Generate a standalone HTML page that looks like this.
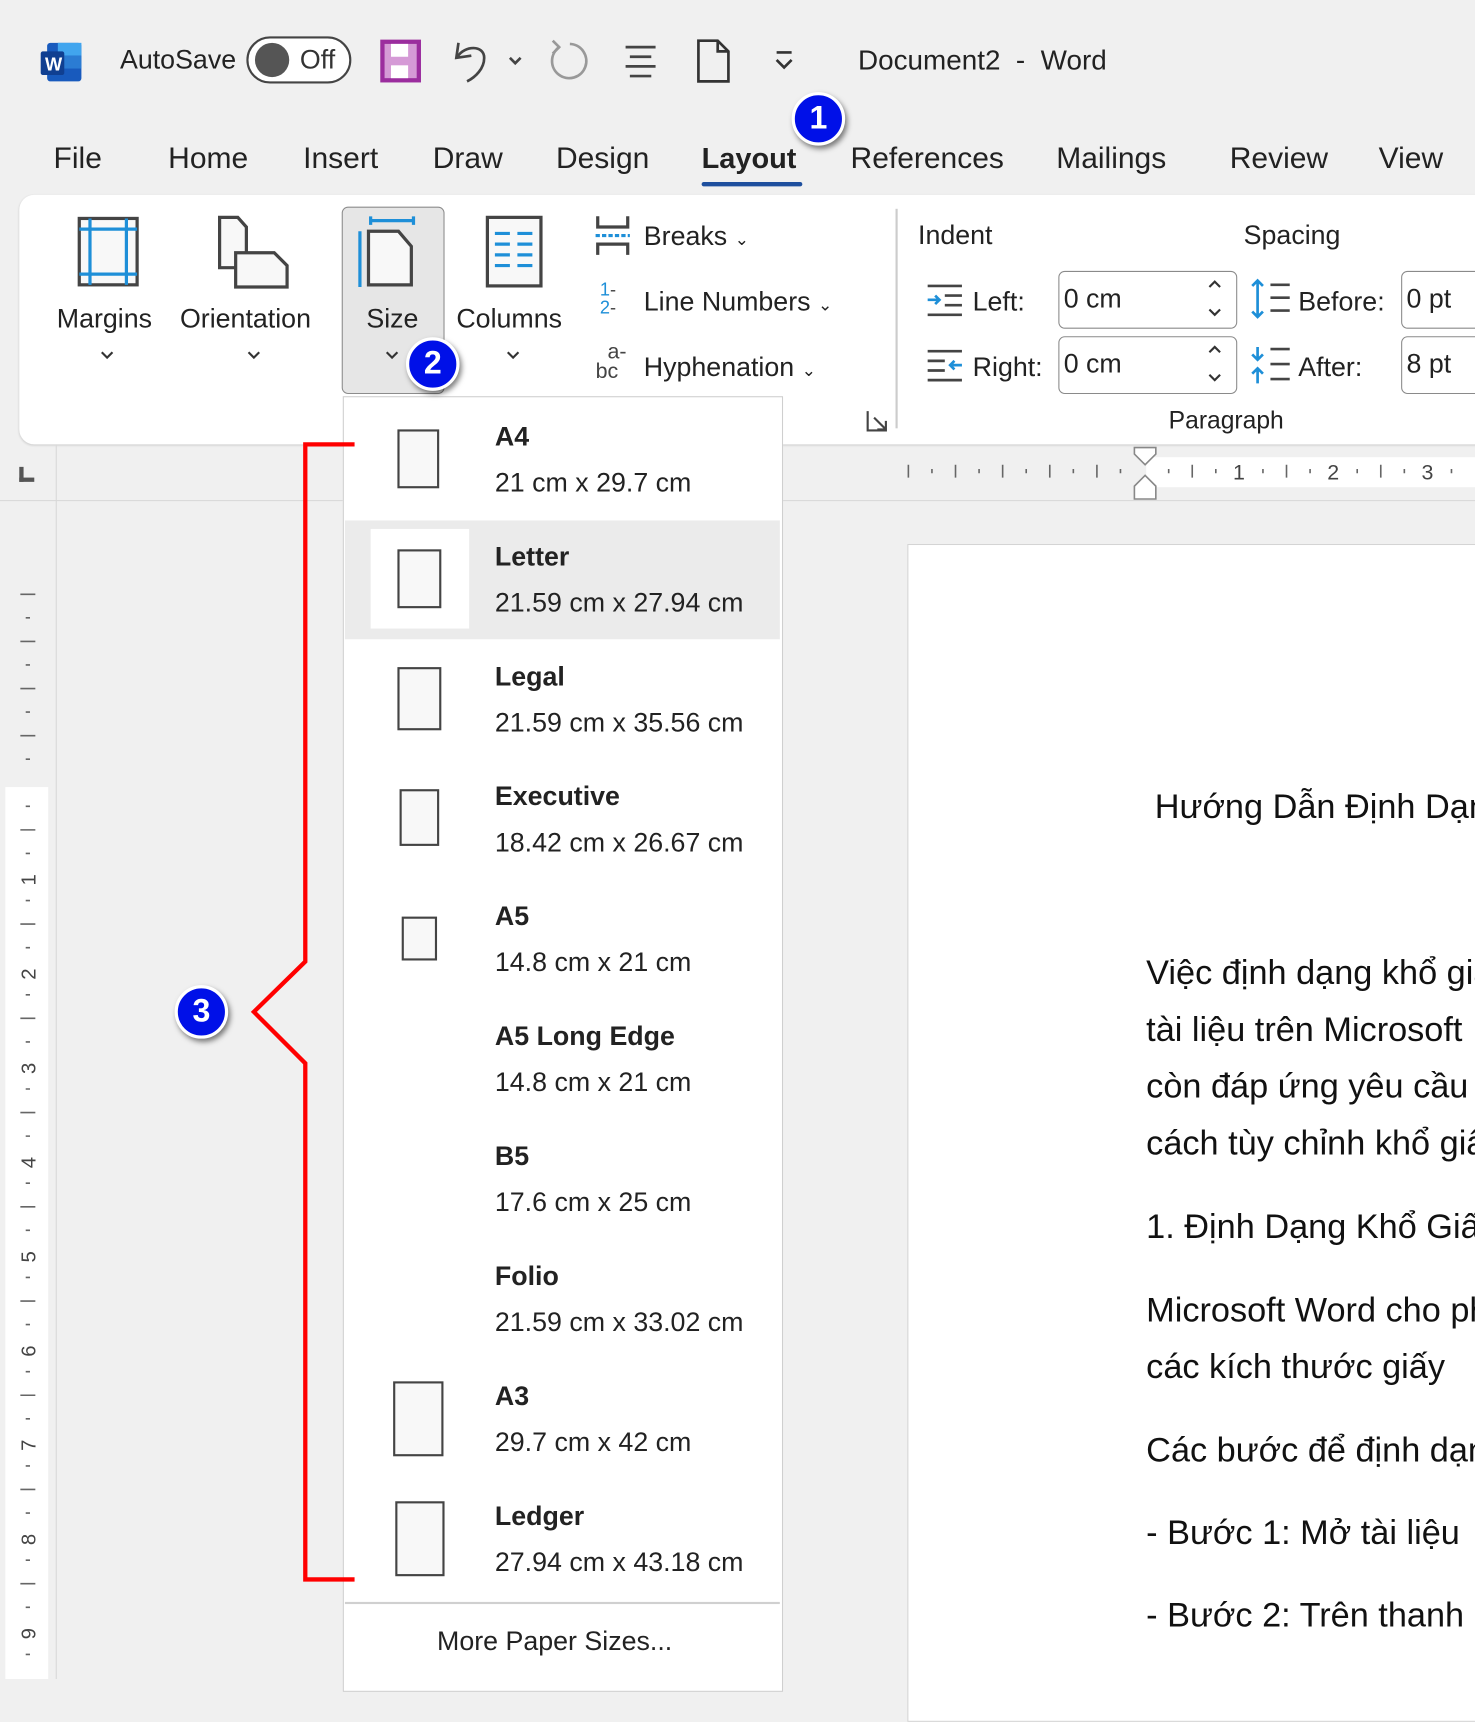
<!DOCTYPE html>
<html><head><meta charset="utf-8"><style>
*{margin:0;padding:0;box-sizing:border-box}
html,body{width:1475px;height:1679px;overflow:hidden;background:#f0f0f0}
#w{position:absolute;left:0;top:0;width:1377px;height:1568px;transform:scale(1.0712,1.0708);transform-origin:0 0;font-family:"Liberation Sans","DejaVu Sans",sans-serif;color:#222}
.a{position:absolute;white-space:nowrap}
.t{font-size:28px;top:132px}
.r{font-size:25px}
.it b{display:block;font-size:25px;color:#222}
.lbl{position:absolute;left:462px;font-size:25px;color:#222;white-space:nowrap}
.ttl{font-weight:bold}
.pg{position:absolute;border:2px solid #444;background:#f8f8f8}
.badge{position:absolute;width:50px;height:50px;border-radius:50%;background:#0010e8;border:3px solid #fff;box-shadow:2px 3px 5px rgba(0,0,0,.5);color:#fff;font-weight:bold;font-size:30px;text-align:center;line-height:44px}
.doc{position:absolute;left:1070px;font-size:32px;color:#111;white-space:nowrap}
.box{position:absolute;border:1.5px solid #8a8a8a;border-radius:6px;background:#fff;font-size:25px;padding-left:4px;line-height:50px}
</style></head><body><div id="w">
<!-- title bar -->
<svg class="a" style="left:36px;top:38px" width="42" height="40"><rect x="8" y="2" width="32" height="36" rx="3" fill="#185abd"/><rect x="18" y="2" width="22" height="12" fill="#41a5ee"/><rect x="18" y="14" width="22" height="12" fill="#2b7cd3"/><rect x="2" y="10" width="22" height="22" rx="2" fill="#103f91"/><text x="6" y="28" fill="#fff" font-size="17" font-weight="bold" font-family="Liberation Sans">W</text></svg>
<div class="a" style="left:112px;top:42px;font-size:25px">AutoSave</div>
<div class="a" style="left:230px;top:34px;width:98px;height:44px;border:2px solid #444;border-radius:22px;background:#fff"></div>
<div class="a" style="left:238px;top:40px;width:32px;height:32px;border-radius:50%;background:#555"></div>
<div class="a" style="left:280px;top:42px;font-size:25px;color:#333">Off</div>
<svg class="a" style="left:354px;top:36px" width="40" height="42"><rect x="3" y="3" width="34" height="36" fill="#d59ad6" stroke="#9b2d9e" stroke-width="4"/><rect x="11" y="5" width="16" height="12" fill="#fff"/><rect x="11" y="25" width="16" height="12" fill="#fff"/></svg>
<svg class="a" style="left:420px;top:34px" width="72" height="46" fill="none" stroke="#444" stroke-width="2.5"><path d="M8 6 L6 20 L20 18"/><path d="M7 19 C14 8 32 8 32 20 C32 30 24 38 16 42"/><path d="M56 20 L61 25 L66 20"/></svg>
<svg class="a" style="left:508px;top:34px" width="46" height="46" fill="none" stroke="#999" stroke-width="2.5"><path d="M14 10 A16 16 0 1 0 24 7"/><path d="M8 4 L14 10 L8 16"/></svg>
<svg class="a" style="left:580px;top:40px" width="36" height="34" stroke="#444" stroke-width="2.5"><line x1="4" y1="4" x2="32" y2="4"/><line x1="8" y1="13" x2="28" y2="13"/><line x1="4" y1="22" x2="32" y2="22"/><line x1="8" y1="31" x2="28" y2="31"/></svg>
<svg class="a" style="left:648px;top:36px" width="36" height="42" fill="none" stroke="#333" stroke-width="2.5"><path d="M4 2 H22 L32 12 V40 H4 Z M22 2 V12 H32"/></svg>
<svg class="a" style="left:720px;top:46px" width="24" height="22" fill="none" stroke="#333" stroke-width="2.5"><line x1="5" y1="3" x2="19" y2="3"/><path d="M5 10 L12 17 L19 10"/></svg>
<div class="a" style="left:801px;top:41px;font-size:26px;color:#222">Document2&nbsp; - &nbsp;Word</div>
<!-- tabs -->
<div class="a t" style="left:50px">File</div>
<div class="a t" style="left:157px">Home</div>
<div class="a t" style="left:283px">Insert</div>
<div class="a t" style="left:404px">Draw</div>
<div class="a t" style="left:519px">Design</div>
<div class="a t" style="left:655px;font-weight:bold;font-size:27px;top:133px">Layout</div>
<div class="a" style="left:655px;top:170px;width:94px;height:4px;background:#1e4f9e;border-radius:2px"></div>
<div class="a t" style="left:794px">References</div>
<div class="a t" style="left:986px">Mailings</div>
<div class="a t" style="left:1148px">Review</div>
<div class="a t" style="left:1287px">View</div>
<!-- ribbon -->
<div class="a" style="left:18px;top:182px;width:1380px;height:233px;background:#fff;border-radius:14px;box-shadow:0 1px 2px rgba(0,0,0,.15)"></div>
<div class="a" style="left:319px;top:193px;width:96px;height:175px;background:#e6e6e6;border:1.5px solid #8c8c8c;border-radius:6px"></div>
<svg class="a" style="left:70px;top:200px" width="62" height="70"><rect x="4" y="4" width="54" height="62" fill="#f8f8f8" stroke="#444" stroke-width="3"/><g stroke="#1e8fd8" stroke-width="3"><line x1="4" y1="14" x2="58" y2="14"/><line x1="4" y1="56" x2="58" y2="56"/><line x1="14" y1="4" x2="14" y2="66"/><line x1="48" y1="4" x2="48" y2="66"/></g></svg>
<svg class="a" style="left:200px;top:200px" width="74" height="70" fill="#f8f8f8" stroke="#444" stroke-width="3"><path d="M5 3 H22 L30 12 V50 H5 Z"/><path d="M20 36 H56 L68 48 V68 H20 Z"/></svg>
<svg class="a" style="left:332px;top:202px" width="60" height="68"><g stroke="#1e8fd8" stroke-width="3"><line x1="14" y1="4" x2="54" y2="4"/><line x1="14" y1="0" x2="14" y2="8"/><line x1="54" y1="0" x2="54" y2="8"/><line x1="4" y1="14" x2="4" y2="66"/></g><path d="M12 14 H40 L52 28 V64 H12 Z" fill="#f8f8f8" stroke="#444" stroke-width="3"/></svg>
<svg class="a" style="left:452px;top:200px" width="56" height="70"><rect x="3" y="3" width="50" height="64" fill="#f8f8f8" stroke="#444" stroke-width="3"/><g stroke="#1e8fd8" stroke-width="3"><line x1="10" y1="18" x2="24" y2="18"/><line x1="31" y1="18" x2="45" y2="18"/><line x1="10" y1="28" x2="24" y2="28"/><line x1="31" y1="28" x2="45" y2="28"/><line x1="10" y1="38" x2="24" y2="38"/><line x1="31" y1="38" x2="45" y2="38"/><line x1="10" y1="48" x2="24" y2="48"/><line x1="31" y1="48" x2="45" y2="48"/></g></svg>
<div class="a r" style="left:53px;top:284px">Margins</div>
<div class="a r" style="left:168px;top:284px">Orientation</div>
<div class="a r" style="left:342px;top:284px">Size</div>
<div class="a r" style="left:426px;top:284px">Columns</div>
<svg class="a" style="left:0;top:325px" width="500" height="16" fill="none" stroke="#333" stroke-width="2"><path d="M95 4 L100 9 L105 4"/><path d="M232 4 L237 9 L242 4"/><path d="M361 4 L366 9 L371 4"/><path d="M474 4 L479 9 L484 4"/></svg>
<svg class="a" style="left:554px;top:200px" width="36" height="40"><g stroke="#444" stroke-width="3" fill="none"><path d="M4 2 V12 H32 V2"/><path d="M4 38 V28 H32 V38"/></g><line x1="2" y1="20" x2="34" y2="20" stroke="#1e8fd8" stroke-width="3" stroke-dasharray="4 2"/></svg>
<div class="a r" style="left:601px;top:207px">Breaks <span style="font-size:16px">&#8964;</span></div>
<div class="a" style="left:560px;top:262px;font-size:17px;color:#1e8fd8;line-height:17px">1<span style="color:#444">-</span><br>2<span style="color:#444">-</span></div>
<div class="a r" style="left:601px;top:268px">Line Numbers <span style="font-size:16px">&#8964;</span></div>
<div class="a" style="left:556px;top:320px;font-size:20px;color:#444;line-height:18px">&nbsp;&nbsp;a-<br>bc</div>
<div class="a r" style="left:601px;top:329px">Hyphenation <span style="font-size:16px">&#8964;</span></div>
<svg class="a" style="left:808px;top:382px" width="22" height="22" fill="none" stroke="#444" stroke-width="2"><path d="M2 2 V20 H20 M8 8 L19 19 M19 11 V19 H11"/></svg>
<div class="a" style="left:836px;top:195px;width:1.5px;height:205px;background:#ccc"></div>
<div class="a r" style="left:857px;top:206px">Indent</div>
<div class="a r" style="left:1161px;top:206px">Spacing</div>
<svg class="a" style="left:862px;top:264px" width="40" height="96"><g stroke="#444" stroke-width="2.5"><line x1="4" y1="3" x2="36" y2="3"/><line x1="20" y1="12" x2="36" y2="12"/><line x1="20" y1="21" x2="36" y2="21"/><line x1="4" y1="30" x2="36" y2="30"/><line x1="4" y1="64" x2="36" y2="64"/><line x1="4" y1="73" x2="20" y2="73"/><line x1="4" y1="82" x2="20" y2="82"/><line x1="4" y1="91" x2="36" y2="91"/></g><g stroke="#1e8fd8" stroke-width="2.5" fill="none"><path d="M4 16 H15 M11 12 L15 16 L11 20"/><path d="M36 77 H25 M29 73 L25 77 L29 81"/></g></svg>
<div class="a r" style="left:908px;top:268px">Left:</div>
<div class="a r" style="left:908px;top:329px">Right:</div>
<div class="box" style="left:988px;top:253px;width:167px;height:54px">0 cm</div>
<div class="box" style="left:988px;top:314px;width:167px;height:54px">0 cm</div>
<svg class="a" style="left:1124px;top:258px" width="20" height="106" fill="none" stroke="#333" stroke-width="2"><path d="M5 10 L10 5 L15 10"/><path d="M5 31 L10 36 L15 31"/><path d="M5 71 L10 66 L15 71"/><path d="M5 92 L10 97 L15 92"/></svg>
<svg class="a" style="left:1164px;top:260px" width="44" height="102"><g stroke="#1e8fd8" stroke-width="2.5" fill="none"><path d="M10 2 V36 M5 7 L10 2 L15 7 M5 31 L10 36 L15 31"/><path d="M10 64 V76 M5 71 L10 76 L15 71"/><path d="M10 84 V98 M5 89 L10 84 L15 89"/></g><g stroke="#444" stroke-width="2.5"><line x1="22" y1="6" x2="40" y2="6"/><line x1="22" y1="18" x2="40" y2="18"/><line x1="22" y1="30" x2="40" y2="30"/><line x1="22" y1="66" x2="40" y2="66"/><line x1="22" y1="80" x2="40" y2="80"/><line x1="22" y1="94" x2="40" y2="94"/></g></svg>
<div class="a r" style="left:1212px;top:268px">Before:</div>
<div class="a r" style="left:1212px;top:329px">After:</div>
<div class="box" style="left:1308px;top:253px;width:90px;height:54px">0 pt</div>
<div class="box" style="left:1308px;top:314px;width:90px;height:54px">8 pt</div>
<div class="a" style="left:1091px;top:379px;font-size:23px">Paragraph</div>
<!-- rulers -->
<div class="a" style="left:18px;top:436px;width:14px;height:14px;border-left:4px solid #555;border-bottom:4px solid #555"></div>
<div class="a" style="left:52px;top:415px;width:1px;height:1153px;background:#d8d8d8"></div>
<div class="a" style="left:0;top:467px;width:1377px;height:1px;background:#d8d8d8"></div>
<div class="a" style="left:1070px;top:427px;width:310px;height:28px;background:#fff"></div>
<svg class="a" style="left:840px;top:416px" width="540" height="52"><g stroke="#666" stroke-width="1.5"><line x1="8" y1="18" x2="8" y2="30"/><line x1="30" y1="22" x2="30" y2="26"/><line x1="52" y1="18" x2="52" y2="30"/><line x1="74" y1="22" x2="74" y2="26"/><line x1="96" y1="18" x2="96" y2="30"/><line x1="118" y1="22" x2="118" y2="26"/><line x1="140" y1="18" x2="140" y2="30"/><line x1="162" y1="22" x2="162" y2="26"/><line x1="184" y1="18" x2="184" y2="30"/><line x1="206" y1="22" x2="206" y2="26"/><line x1="251" y1="22" x2="251" y2="26"/><line x1="273" y1="18" x2="273" y2="30"/><line x1="295" y1="22" x2="295" y2="26"/><line x1="339" y1="22" x2="339" y2="26"/><line x1="361" y1="18" x2="361" y2="30"/><line x1="383" y1="22" x2="383" y2="26"/><line x1="427" y1="22" x2="427" y2="26"/><line x1="449" y1="18" x2="449" y2="30"/><line x1="471" y1="22" x2="471" y2="26"/><line x1="515" y1="22" x2="515" y2="26"/></g><path d="M219 2 H239 V8 L229 18 L219 8 Z M219 50 V38 L229 28 L239 38 V50 Z" fill="#fff" stroke="#888" stroke-width="1.5"/><g font-size="20" fill="#444" font-family="Liberation Sans"><text x="311" y="32">1</text><text x="399" y="32">2</text><text x="487" y="32">3</text></g></svg>
<div class="a" style="left:5px;top:735px;width:40px;height:833px;background:#fff"></div>
<svg class="a" style="left:0;top:540px" width="52" height="1028"><g stroke="#666" stroke-width="1.5">
<line x1="19" y1="15" x2="33" y2="15"/><line x1="24" y1="37" x2="28" y2="37"/><line x1="19" y1="59" x2="33" y2="59"/><line x1="24" y1="81" x2="28" y2="81"/><line x1="19" y1="103" x2="33" y2="103"/><line x1="24" y1="125" x2="28" y2="125"/><line x1="19" y1="147" x2="33" y2="147"/><line x1="24" y1="169" x2="28" y2="169"/>
<line x1="24" y1="213" x2="28" y2="213"/><line x1="19" y1="235" x2="33" y2="235"/><line x1="24" y1="257" x2="28" y2="257"/><line x1="24" y1="301" x2="28" y2="301"/><line x1="19" y1="323" x2="33" y2="323"/><line x1="24" y1="345" x2="28" y2="345"/><line x1="24" y1="389" x2="28" y2="389"/><line x1="19" y1="411" x2="33" y2="411"/><line x1="24" y1="433" x2="28" y2="433"/><line x1="24" y1="477" x2="28" y2="477"/><line x1="19" y1="499" x2="33" y2="499"/><line x1="24" y1="521" x2="28" y2="521"/><line x1="24" y1="565" x2="28" y2="565"/><line x1="19" y1="587" x2="33" y2="587"/><line x1="24" y1="609" x2="28" y2="609"/><line x1="24" y1="653" x2="28" y2="653"/><line x1="19" y1="675" x2="33" y2="675"/><line x1="24" y1="697" x2="28" y2="697"/><line x1="24" y1="741" x2="28" y2="741"/><line x1="19" y1="763" x2="33" y2="763"/><line x1="24" y1="785" x2="28" y2="785"/><line x1="24" y1="829" x2="28" y2="829"/><line x1="19" y1="851" x2="33" y2="851"/><line x1="24" y1="873" x2="28" y2="873"/><line x1="24" y1="917" x2="28" y2="917"/><line x1="19" y1="939" x2="33" y2="939"/><line x1="24" y1="961" x2="28" y2="961"/><line x1="24" y1="1005" x2="28" y2="1005"/></g>
<g font-size="19" fill="#444" font-family="Liberation Sans"><text transform="translate(33,287) rotate(-90)">1</text><text transform="translate(33,375) rotate(-90)">2</text><text transform="translate(33,463) rotate(-90)">3</text><text transform="translate(33,551) rotate(-90)">4</text><text transform="translate(33,639) rotate(-90)">5</text><text transform="translate(33,727) rotate(-90)">6</text><text transform="translate(33,815) rotate(-90)">7</text><text transform="translate(33,903) rotate(-90)">8</text><text transform="translate(33,991) rotate(-90)">9</text></g></svg>
<!-- document -->
<div class="a" style="left:847px;top:508px;width:560px;height:1100px;background:#fff;border:1px solid #d4d4d4"></div>
<div class="doc" style="left:1078px;top:735px">Hướng Dẫn Định Dạng</div>
<div class="doc" style="top:890px">Việc định dạng khổ giấy</div>
<div class="doc" style="top:943px">tài liệu trên Microsoft</div>
<div class="doc" style="top:996px">còn đáp ứng yêu cầu</div>
<div class="doc" style="top:1049px">cách tùy chỉnh khổ giấy</div>
<div class="doc" style="top:1127px">1. Định Dạng Khổ Giấy</div>
<div class="doc" style="top:1205px">Microsoft Word cho phép</div>
<div class="doc" style="top:1258px">các kích thước giấy</div>
<div class="doc" style="top:1336px">Các bước để định dạng</div>
<div class="doc" style="top:1413px">- Bước 1: Mở tài liệu</div>
<div class="doc" style="top:1490px">- Bước 2: Trên thanh</div>
<!-- dropdown -->
<div class="a" style="left:320px;top:370px;width:411px;height:1210px;background:#fff;border:1px solid #cfcfcf"></div>
<div class="a" style="left:322px;top:486px;width:406px;height:111px;background:#ebebeb"></div>
<div class="a" style="left:346px;top:494px;width:92px;height:93px;background:#fff"></div>
<div class="pg" style="left:371px;top:401px;width:39px;height:55px"></div>
<div class="pg" style="left:371px;top:513px;width:41px;height:55px"></div>
<div class="pg" style="left:371px;top:623px;width:41px;height:59px"></div>
<div class="pg" style="left:373px;top:737px;width:37px;height:53px"></div>
<div class="pg" style="left:375px;top:856px;width:33px;height:41px"></div>
<div class="pg" style="left:367px;top:1290px;width:47px;height:70px"></div>
<div class="pg" style="left:369px;top:1402px;width:46px;height:70px"></div>
<div class="lbl ttl" style="top:394px">A4</div><div class="lbl" style="top:437px">21 cm x 29.7 cm</div>
<div class="lbl ttl" style="top:506px">Letter</div><div class="lbl" style="top:549px">21.59 cm x 27.94 cm</div>
<div class="lbl ttl" style="top:618px">Legal</div><div class="lbl" style="top:661px">21.59 cm x 35.56 cm</div>
<div class="lbl ttl" style="top:730px">Executive</div><div class="lbl" style="top:773px">18.42 cm x 26.67 cm</div>
<div class="lbl ttl" style="top:842px">A5</div><div class="lbl" style="top:885px">14.8 cm x 21 cm</div>
<div class="lbl ttl" style="top:954px">A5 Long Edge</div><div class="lbl" style="top:997px">14.8 cm x 21 cm</div>
<div class="lbl ttl" style="top:1066px">B5</div><div class="lbl" style="top:1109px">17.6 cm x 25 cm</div>
<div class="lbl ttl" style="top:1178px">Folio</div><div class="lbl" style="top:1221px">21.59 cm x 33.02 cm</div>
<div class="lbl ttl" style="top:1290px">A3</div><div class="lbl" style="top:1333px">29.7 cm x 42 cm</div>
<div class="lbl ttl" style="top:1402px">Ledger</div><div class="lbl" style="top:1445px">27.94 cm x 43.18 cm</div>
<div class="a" style="left:322px;top:1496px;width:406px;height:1.5px;background:#d0d0d0"></div>
<div class="a" style="left:408px;top:1519px;font-size:25px">More Paper Sizes...</div>
<!-- red bracket -->
<svg class="a" style="left:0;top:0" width="400" height="1568"><path d="M331 415 H285 V898 L237 945 L285 993 V1475 H331" fill="none" stroke="#f00" stroke-width="4"/></svg>
<!-- badges -->
<div class="badge" style="left:739px;top:86px">1</div>
<div class="badge" style="left:379px;top:315px">2</div>
<div class="badge" style="left:163px;top:920px">3</div>
</div></body></html>
